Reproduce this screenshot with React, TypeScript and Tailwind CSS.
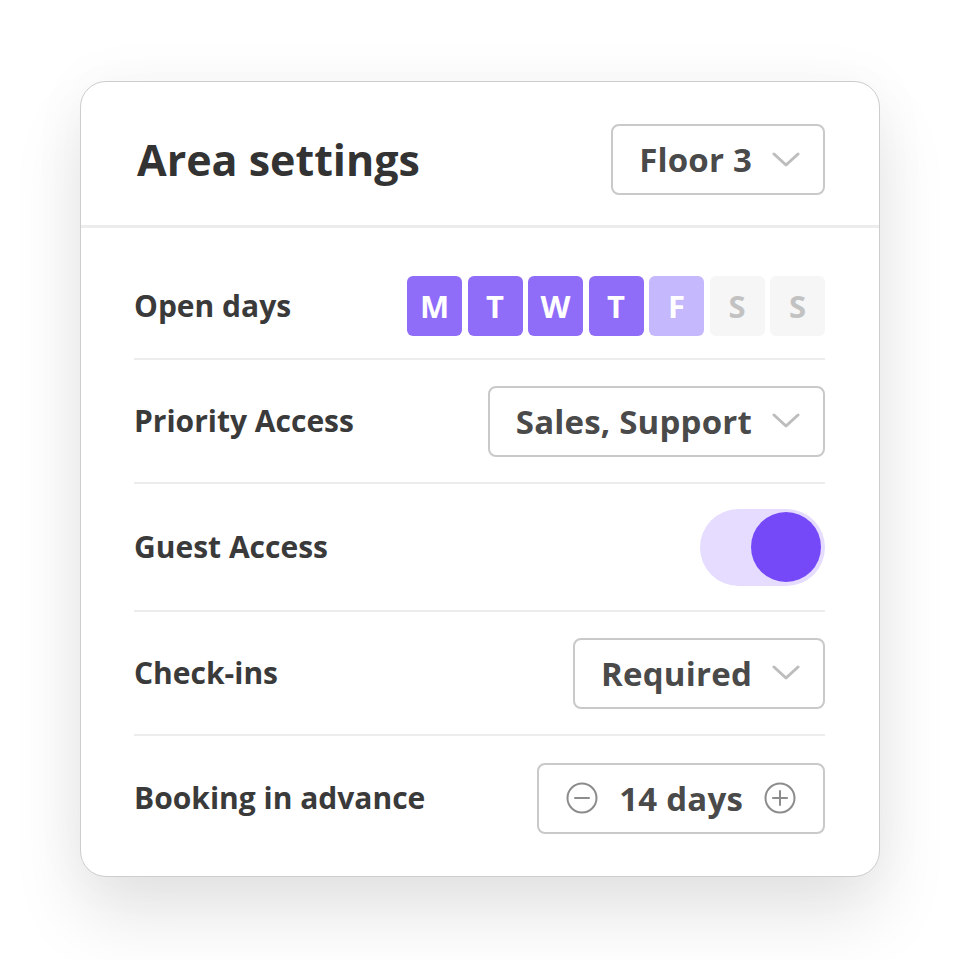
import { ReactNode } from "react";

const font = { fontFamily: "'Open Sans', Lato, sans-serif" };

function Chevron() {
  return (
    <svg width="28" height="16" viewBox="0 0 28 16" fill="none" className="shrink-0">
      <path d="M2 2L14 13L26 2" stroke="#bdbdbd" strokeWidth="3" strokeLinecap="round" strokeLinejoin="round" />
    </svg>
  );
}

function Select({ value }: { value: string }) {
  return (
    <div className="h-[71px] flex items-center gap-[20px] pl-[26px] pr-[23px] border-2 border-[#c9c9c9] rounded-[8px]">
      <span className="text-[33px] font-bold text-[#4a4a4a] leading-none tracking-[0.2px]">{value}</span>
      <Chevron />
    </div>
  );
}

function Row({ label, children, className }: { label: string; children: ReactNode; className: string }) {
  return (
    <div className={`flex items-center justify-between ${className}`}>
      <span className="text-[30px] font-bold text-[#3a3a3a] leading-none">{label}</span>
      {children}
    </div>
  );
}

const days = [
  { d: "M", cls: "bg-[#8f6df9] text-white" },
  { d: "T", cls: "bg-[#8f6df9] text-white" },
  { d: "W", cls: "bg-[#8f6df9] text-white" },
  { d: "T", cls: "bg-[#8f6df9] text-white" },
  { d: "F", cls: "bg-[#c6b8fd] text-white" },
  { d: "S", cls: "bg-[#f6f6f6] text-[#c2c2c2]" },
  { d: "S", cls: "bg-[#f6f6f6] text-[#c2c2c2]" },
];

function CircleIcon({ plus }: { plus?: boolean }) {
  return (
    <svg width="32" height="32" viewBox="0 0 32 32" fill="none" className="shrink-0">
      <circle cx="16" cy="16" r="14.5" stroke="#8c8c8c" strokeWidth="2" />
      <path d="M9 16H23" stroke="#8c8c8c" strokeWidth="2" strokeLinecap="round" />
      {plus && <path d="M16 9V23" stroke="#8c8c8c" strokeWidth="2" strokeLinecap="round" />}
    </svg>
  );
}

export default function App() {
  return (
    <div className="w-[960px] h-[960px] bg-white pt-[81px] pl-[80px]" style={font}>
      <div className="w-[800px] h-[796px] bg-white border border-[#cdcdcd] rounded-[26px] shadow-[0_40px_70px_rgba(0,0,0,0.10),0_0_60px_rgba(0,0,0,0.04)] flex flex-col">
        <div className="h-[146px] pt-[12px] flex items-center justify-between pl-[56px] pr-[54px] border-b-[3px] border-[#ececec]">
          <h1 className="text-[43px] font-bold text-[#333333] leading-none">Area settings</h1>
          <Select value="Floor 3" />
        </div>
        <div className="flex flex-col px-[53px] pr-[54px]">
          <Row label="Open days" className="h-[132px] pt-[26px] border-b-2 border-[#ececec]">
            <div className="flex gap-[5.5px]">
              {days.map((x, i) => (
                <div key={i} className={`w-[55px] h-[60px] rounded-[6px] flex items-center justify-center text-[31px] font-bold ${x.cls}`}>
                  {x.d}
                </div>
              ))}
            </div>
          </Row>
          <Row label="Priority Access" className="h-[124px] border-b-2 border-[#ececec]">
            <Select value="Sales, Support" />
          </Row>
          <Row label="Guest Access" className="h-[128px] border-b-2 border-[#ececec]">
            <div className="w-[125px] h-[77px] rounded-full bg-[#e5dcff] flex items-center justify-end pr-[4px]">
              <div className="w-[70px] h-[70px] rounded-full bg-[#7548f8]" />
            </div>
          </Row>
          <Row label="Check-ins" className="h-[124px] border-b-2 border-[#ececec]">
            <Select value="Required" />
          </Row>
          <Row label="Booking in advance" className="h-[124px]">
            <div className="h-[71px] flex items-center gap-[21px] pl-[27px] pr-[27px] border-2 border-[#c9c9c9] rounded-[8px]">
              <CircleIcon />
              <span className="text-[33px] font-bold text-[#4a4a4a] leading-none tracking-[0.2px]">14 days</span>
              <CircleIcon plus />
            </div>
          </Row>
        </div>
      </div>
    </div>
  );
}
